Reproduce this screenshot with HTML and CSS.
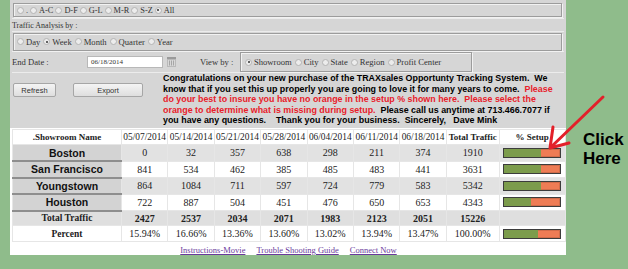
FILE: index.html
```html
<!doctype html>
<html lang="en">
    <head>
        <meta charset="UTF-8" />
        <title>Showroom Traffic</title>
        <link rel="stylesheet" href="styles.css">
    </head>
    <body>
        <div class="page">
            <div class="panel">
                <div class="controls">
                    <div class="row row-alpha">
                        <div class="group">
                            <span class="opt"><span class="dot"></span>.</span>
                            <span class="opt"><span class="dot"></span>A-C</span>
                            <span class="opt"><span class="dot"></span>D-F</span>
                            <span class="opt"><span class="dot"></span>G-L</span>
                            <span class="opt"><span class="dot"></span>M-R</span>
                            <span class="opt"><span class="dot"></span>S-Z</span>
                            <span class="opt"><span class="dot on"></span>All</span>
                        </div>
                    </div>
                    <div class="row row-label">Traffic Analysis by :</div>
                    <div class="row row-period">
                        <div class="group">
                            <span class="opt"><span class="dot"></span>Day</span>
                            <span class="opt"><span class="dot on"></span>Week</span>
                            <span class="opt"><span class="dot"></span>Month</span>
                            <span class="opt"><span class="dot"></span>Quarter</span>
                            <span class="opt"><span class="dot"></span>Year</span>
                        </div>
                    </div>
                    <div class="row row-date">
                        <span class="lbl end-lbl">End Date :</span>
                        <span class="date-input">06/18/2014</span>
                        <svg class="cal" width="9" height="10" viewBox="0 0 9 10">
                            <rect x="0" y="0" width="9" height="10" fill="#b9b9b9" />
                            <rect x="0" y="0" width="9" height="2" fill="#9a9a9a" />
                            <rect x="1" y="3" width="7" height="6" fill="#d8d8d8" />
                            <path d="M2.5 3.5v5M4.5 3.5v5M6.5 3.5v5" stroke="#a5a5a5" stroke-width="1" />
                        </svg>
                        <span class="lbl view-lbl">View by :</span>
                        <div class="group group-view">
                            <span class="opt"><span class="dot on"></span>Showroom</span>
                            <span class="opt"><span class="dot"></span>City</span>
                            <span class="opt"><span class="dot"></span>State</span>
                            <span class="opt"><span class="dot"></span>Region</span>
                            <span class="opt"><span class="dot"></span>Profit Center</span>
                        </div>
                    </div>
                    <div class="row row-intro">
                        <div class="actions">
                            <button class="btn btn-refresh">Refresh</button>
                            <button class="btn btn-export">Export</button>
                        </div>
                        <p class="message">
                            Congratulations on your new purchase of the TRAXsales Opportunty Tracking System.&nbsp; We<br>
                            know that if you set this up properly you are going to love it for many years to come.&nbsp; <span class="warn">Please<br>
                            do your best to insure you have no orange in the setup % shown here.&nbsp; Please select the<br>
                            orange to determine what is missing during setup.</span>&nbsp; Please call us anytime at 713.466.7077 if<br>
                            you have any questions.&nbsp;&nbsp;&nbsp; Thank you for your business.&nbsp; Sincerely,&nbsp;&nbsp; Dave Mink
                        </p>
                    </div>
                </div>

                <div class="report">
                    <table class="traffic">
                        <colgroup>
                            <col class="c-name">
                            <col class="c-date"><col class="c-date"><col class="c-date"><col class="c-date">
                            <col class="c-date"><col class="c-date"><col class="c-date">
                            <col class="c-total">
                            <col class="c-setup">
                        </colgroup>
                        <thead>
                            <tr>
                                <th class="hd-label">.Showroom Name</th>
                                <th>05/07/2014</th>
                                <th>05/14/2014</th>
                                <th>05/21/2014</th>
                                <th>05/28/2014</th>
                                <th>06/04/2014</th>
                                <th>06/11/2014</th>
                                <th>06/18/2014</th>
                                <th class="hd-label">Total Traffic</th>
                                <th class="hd-label">% Setup</th>
                            </tr>
                        </thead>
                        <tbody>
                            <tr class="alt">
                                <th class="store">Boston</th>
                                <td>0</td><td>32</td><td>357</td><td>638</td><td>298</td><td>211</td><td>374</td><td>1910</td>
                                <td class="setup"><span class="bar"><span class="bar-done" style="width: 66%"></span></span></td>
                            </tr>
                            <tr>
                                <th class="store">San Francisco</th>
                                <td>841</td><td>534</td><td>462</td><td>385</td><td>485</td><td>483</td><td>441</td><td>3631</td>
                                <td class="setup"><span class="bar"><span class="bar-done" style="width: 66%"></span></span></td>
                            </tr>
                            <tr class="alt">
                                <th class="store">Youngstown</th>
                                <td>864</td><td>1084</td><td>711</td><td>597</td><td>724</td><td>779</td><td>583</td><td>5342</td>
                                <td class="setup"><span class="bar"><span class="bar-done" style="width: 66%"></span></span></td>
                            </tr>
                            <tr>
                                <th class="store">Houston</th>
                                <td>722</td><td>887</td><td>504</td><td>451</td><td>476</td><td>650</td><td>653</td><td>4343</td>
                                <td class="setup"><span class="bar"><span class="bar-done" style="width: 49%"></span></span></td>
                            </tr>
                            <tr class="sum">
                                <th>Total Traffic</th>
                                <td>2427</td><td>2537</td><td>2034</td><td>2071</td><td>1983</td><td>2123</td><td>2051</td><td>15226</td>
                                <td></td>
                            </tr>
                            <tr class="pct">
                                <th>Percent</th>
                                <td>15.94%</td><td>16.66%</td><td>13.36%</td><td>13.60%</td><td>13.02%</td><td>13.94%</td><td>13.47%</td><td>100.00%</td>
                                <td class="setup"><span class="bar"><span class="bar-done" style="width: 62%"></span></span></td>
                            </tr>
                        </tbody>
                    </table>

                    <div class="links">
                        <a href="#">Instructions-Movie</a>
                        <a href="#">Trouble Shooting Guide</a>
                        <a href="#">Connect Now</a>
                    </div>
                </div>
            </div>

            <div class="callout">Click<br>Here</div>

            <!-- pointer from the callout to the setup bars -->
            <svg class="arrow" width="628" height="269" viewBox="0 0 628 269">
                <path d="M603 97L550 148M553 127L550 148L569 143" fill="none" stroke="#e3202a" stroke-width="3" stroke-linecap="round" stroke-linejoin="round" />
            </svg>
        </div>
    </body>
</html>
```

FILE: styles.css
```css
body {
    margin: 0;
    background: #8fbc8b;
}

.page {
    position: relative;
    display: flex;
    width: 628px;
    height: 269px;
}

.panel {
    margin-left: 10px;
    width: 556px;
    height: 255px;
    background: #fff;
    display: flex;
    flex-direction: column;
    font-family: "Liberation Serif", serif;
    color: #222;
}

.controls {
    background: #d6d6d6;
    padding: 0 2px;
}

.row {
    display: flex;
    align-items: center;
    border-bottom: 1px solid #ececec;
    box-sizing: border-box;
}

.row-alpha {
    height: 19px;
    padding-top: 2px;
}

.row-label {
    height: 13px;
    font-size: 8px;
    color: #333;
}

.row-period {
    height: 20px;
}

.row-date {
    height: 21px;
}

.row-intro {
    height: 55px;
    align-items: flex-start;
    border-bottom: none;
}

.group {
    display: flex;
    align-items: center;
    margin-left: 1px;
    width: 549px;
    box-sizing: border-box;
    padding-left: 3px;
    border: 1px solid #9c9c9c;
    box-shadow: inset 1px 1px 0 #f2f2f2, 1px 1px 0 #f2f2f2;
    font-size: 8.6px;
    color: #333;
}

.row-alpha .group {
    height: 14px;
    font-size: 8.3px;
}

.row-period .group {
    height: 18px;
}

.opt {
    display: flex;
    align-items: center;
    margin-right: 3px;
}

.row-alpha .opt {
    margin-right: 2px;
}

.dot {
    width: 5px;
    height: 5px;
    border-radius: 50%;
    border: 1px solid #b4b4b4;
    background: #ececec;
    margin-right: 2px;
    position: relative;
}

.dot.on::after {
    content: "";
    position: absolute;
    left: 1.5px;
    top: 1.5px;
    width: 2px;
    height: 2px;
    border-radius: 50%;
    background: #333;
}

.lbl {
    font-size: 8.6px;
    color: #333;
}

.end-lbl {
    width: 75px;
}

.date-input {
    width: 76px;
    height: 12px;
    box-sizing: border-box;
    background: #fff;
    border: 1px solid #b8b8b8;
    font-size: 7px;
    line-height: 10px;
    padding-left: 3px;
    color: #333;
}

.cal {
    margin-left: 4px;
}

.view-lbl {
    margin-left: 24px;
    width: 39px;
}

.group-view {
    width: 232px;
    height: 20px;
    padding-left: 4px;
}

.actions {
    display: flex;
    width: 151px;
    padding-top: 10px;
}

.btn {
    height: 14px;
    padding: 0;
    font-family: "Liberation Sans", Arial, sans-serif;
    font-size: 7.5px;
    color: #333;
    background: linear-gradient(#f4f4f4, #dedede);
    border: 1px solid #a6a6a6;
    border-radius: 2px;
    margin-left: 1px;
}

.btn-refresh {
    width: 43px;
}

.btn-export {
    width: 70px;
    margin-left: 17px;
}

.message {
    margin: 0;
    font-family: "Liberation Sans", Arial, sans-serif;
    font-size: 8.9px;
    font-weight: bold;
    line-height: 10.5px;
    color: #000;
    white-space: nowrap;
}

.message .warn {
    color: #e8202a;
}

.report {
    padding: 1px 1px 0 2px;
    display: flex;
    flex-direction: column;
    flex: 1;
}

.traffic {
    width: 553px;
    table-layout: fixed;
    border-collapse: collapse;
    font-size: 10px;
    color: #222;
}

.c-name {
    width: 109px;
}

.c-date {
    width: 46.4px;
}

.c-total {
    width: 53px;
}

.c-setup {
    width: 66px;
}

.traffic th,
.traffic td {
    padding: 0;
    text-align: center;
    border: 1px solid #e6e6e6;
    white-space: nowrap;
}

.traffic thead tr {
    height: 15px;
}

.traffic thead th {
    font-weight: normal;
    font-size: 9.4px;
}

.traffic thead .hd-label {
    font-weight: bold;
    font-size: 9px;
}

.traffic tbody tr {
    height: 16.5px;
}

.traffic tr.alt td {
    background: #e2e2e2;
}

.traffic .store {
    background: #d3d3d3;
    border-bottom: 2px solid #8e8e8e;
    font-family: "Liberation Sans", Arial, sans-serif;
    font-size: 10.5px;
    font-weight: bold;
    color: #111;
}

.traffic tr.sum {
    height: 15px;
}

.traffic tr.sum th,
.traffic tr.sum td {
    background: #dfdfdf;
    font-weight: bold;
}

.traffic tr.sum th,
.traffic tr.pct th {
    font-size: 9.5px;
}

.traffic tr.pct {
    height: 16px;
}

.traffic td.setup {
    text-align: left;
    padding-left: 3px;
}

.bar {
    display: block;
    width: 58px;
    height: 10px;
    box-sizing: border-box;
    border: 1px solid #3c3c3c;
    background: #ee7c55;
    box-shadow: inset 0 0 0 1px rgba(0, 0, 0, 0.12);
}

.bar-done {
    display: block;
    height: 100%;
    background: #7c9c4c;
}

.links {
    display: flex;
    justify-content: center;
    gap: 11px;
    padding-top: 3px;
    font-size: 8.5px;
}

.links a {
    color: #6a3a9c;
}

.callout {
    padding: 130px 0 0 17px;
    font-family: "Liberation Sans", Arial, sans-serif;
    font-size: 17px;
    font-weight: bold;
    line-height: 19px;
    color: #000;
}

.arrow {
    position: absolute;
    left: 0;
    top: 0;
    pointer-events: none;
}
```
